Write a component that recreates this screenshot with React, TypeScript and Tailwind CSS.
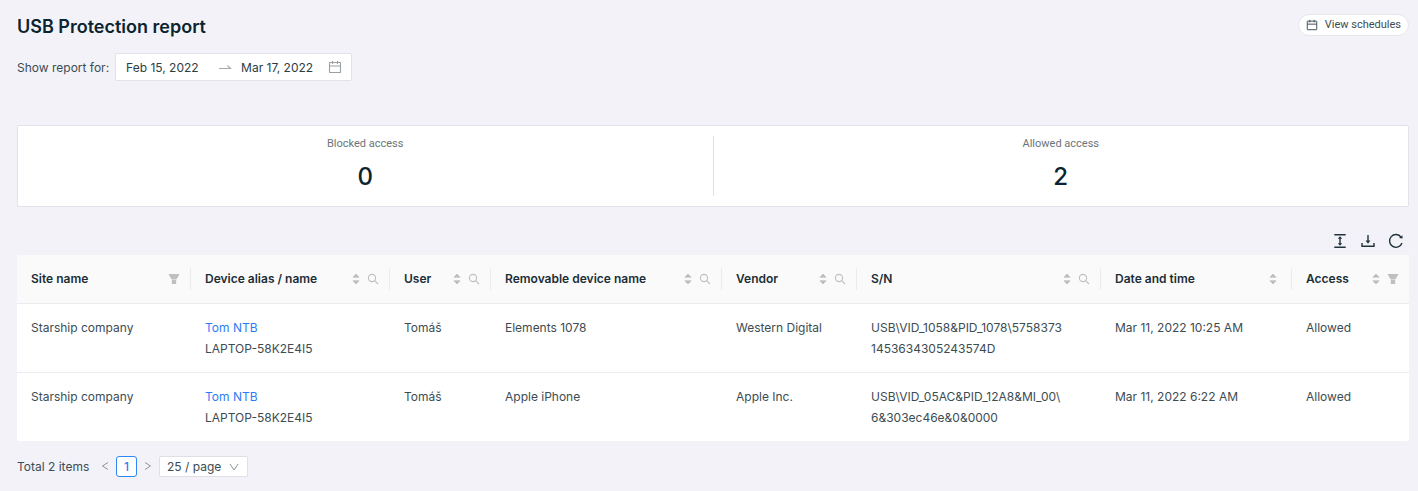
import { useState } from "react";
import type { ReactNode } from "react";

type Column = { title: string; width: string; sort?: boolean; search?: boolean; filter?: boolean };

const columns: Column[] = [
  { title: "Site name", width: "w-[174px]", filter: true },
  { title: "Device alias / name", width: "w-[199px]", sort: true, search: true },
  { title: "User", width: "w-[101px]", sort: true, search: true },
  { title: "Removable device name", width: "w-[231px]", sort: true, search: true },
  { title: "Vendor", width: "w-[135px]", sort: true, search: true },
  { title: "S/N", width: "w-auto", sort: true, search: true },
  { title: "Date and time", width: "w-[191px]", sort: true },
  { title: "Access", width: "w-[117px]", sort: true, filter: true },
];

const rows = [
  {
    site: "Starship company",
    alias: "Tom NTB",
    host: "LAPTOP-58K2E4I5",
    user: "Tomáš",
    device: "Elements 1078",
    vendor: "Western Digital",
    serial: ["USB\\VID_1058&PID_1078\\5758373", "1453634305243574D"],
    date: "Mar 11, 2022 10:25 AM",
    access: "Allowed",
  },
  {
    site: "Starship company",
    alias: "Tom NTB",
    host: "LAPTOP-58K2E4I5",
    user: "Tomáš",
    device: "Apple iPhone",
    vendor: "Apple Inc.",
    serial: ["USB\\VID_05AC&PID_12A8&MI_00\\", "6&303ec46e&0&0000"],
    date: "Mar 11, 2022 6:22 AM",
    access: "Allowed",
  },
];

function CalendarIcon({ className }: { className: string }) {
  return (
    <svg viewBox="0 0 14 14" className={className} fill="none" stroke="currentColor" strokeWidth="1.1" aria-hidden="true">
      <rect x="1.5" y="2.5" width="11" height="10" rx="0.3" />
      <path d="M1.5 6h11M4.5 1v3M9.5 1v3" />
    </svg>
  );
}

function SortIcon() {
  return (
    <svg viewBox="0 0 8 12" className="h-3 w-2" fill="currentColor" stroke="currentColor" strokeWidth="0.8" strokeLinejoin="round" aria-hidden="true">
      <path d="M4 1 7 4.2H1zM4 11 7 7.8H1z" />
    </svg>
  );
}

function SearchIcon() {
  return (
    <svg viewBox="0 0 12 12" className="size-3" fill="none" stroke="currentColor" strokeWidth="1.1" aria-hidden="true">
      <circle cx="5" cy="5" r="3.6" />
      <path d="m7.7 7.7 3.3 3.3" />
    </svg>
  );
}

function FilterIcon() {
  return (
    <svg viewBox="0 0 12 12" className="size-3" fill="currentColor" aria-hidden="true">
      <path d="M1.2 1h9.6c.4 0 .6.4.4.7L8.3 6.4H3.7L.8 1.7C.6 1.4.8 1 1.2 1zM3.8 6.9h4.4v3.6c0 .3-.2.5-.5.5H4.3c-.3 0-.5-.2-.5-.5z" />
    </svg>
  );
}

function IconButton({ label, className, children }: { label: string; className?: string; children: ReactNode }) {
  return (
    <button type="button" aria-label={label} className={`flex items-center justify-center ${className ?? ""}`}>
      {children}
    </button>
  );
}

function Stat({ label, value }: { label: string; value: number }) {
  return (
    <div className="flex flex-1 flex-col items-center">
      <span className="font-['Roboto',sans-serif] text-[11px] leading-4 text-[#6a757a]">{label}</span>
      <span className="mt-2 text-[24px] leading-[34px] font-medium text-[#0b2430]">{value}</span>
    </div>
  );
}

export default function App() {
  const [from, setFrom] = useState("Feb 15, 2022");
  const [to, setTo] = useState("Mar 17, 2022");

  return (
    <main className="min-h-screen bg-[#f3f2f8] pr-[9px] pb-3 pl-[17px] font-['Inter',sans-serif] text-[12px] leading-[21px] text-[#3c4c53]">
      <header className="flex items-start justify-between pt-[14px]">
        <h1 className="text-[18px] leading-[26px] font-semibold text-[#0b2430]">USB Protection report</h1>
        <button
          type="button"
          className="flex h-[22px] items-center gap-[7px] rounded-full border border-[#e6e6ec] bg-white px-[7px] font-['Roboto',sans-serif] text-[11px] leading-5 text-[#3c4c53]"
        >
          <CalendarIcon className="size-3" />
          View schedules
        </button>
      </header>

      <div className="mt-[13px] flex items-center gap-[6px]">
        <label htmlFor="from">Show report for:</label>
        <div className="flex h-7 w-[237px] items-center rounded-[2px] border border-[#e3e2e8] bg-white pr-[9px] pl-[10px]">
          <input
            id="from"
            value={from}
            onChange={(e) => setFrom(e.target.value)}
            className="w-[92px] text-[#2c3d44] outline-none"
          />
          <svg viewBox="0 0 14 8" className="h-2 w-[14px] text-[#a5abaf]" fill="none" stroke="currentColor" strokeWidth="1.2" aria-hidden="true">
            <path d="M1 5.5h11.5L9.5 2.5" />
          </svg>
          <input
            aria-label="Report end date"
            value={to}
            onChange={(e) => setTo(e.target.value)}
            className="ml-[9px] w-0 flex-1 text-[#2c3d44] outline-none"
          />
          <CalendarIcon className="size-[14px] text-[#9aa1a5]" />
        </div>
      </div>

      <section className="mt-11 flex h-[82px] rounded-[2px] border border-[#e3e2e8] bg-white py-[10px]">
        <Stat label="Blocked access" value={0} />
        <div className="w-px bg-[#dedee3]" />
        <Stat label="Allowed access" value={2} />
      </section>

      <div className="mt-[26px] flex justify-end gap-3 pr-[5px] text-[#21343d]">
        <IconButton label="Density">
          <svg viewBox="0 0 16 16" className="size-4" fill="none" stroke="currentColor" strokeWidth="1.4" aria-hidden="true">
            <path d="M2.3 1.7h11.4M2.3 14.3h11.4M8 4v8" />
            <path d="M5.8 5.8 8 3.2l2.2 2.6zM5.8 10.2 8 12.8l2.2-2.6z" fill="currentColor" stroke="none" />
          </svg>
        </IconButton>
        <IconButton label="Download">
          <svg viewBox="0 0 16 16" className="size-4" fill="none" stroke="currentColor" strokeWidth="1.4" aria-hidden="true">
            <path d="M2 10v3.3h12V10M8 2v7" />
            <path d="M5.6 7.6h4.8L8 10.7z" fill="currentColor" stroke="none" />
          </svg>
        </IconButton>
        <IconButton label="Reload">
          <svg viewBox="0 0 16 16" className="size-4" fill="none" stroke="currentColor" strokeWidth="1.4" aria-hidden="true">
            <path d="M13.1 4.1A6.4 6.4 0 1 0 14 10" />
            <path d="M11 5 14.6 5.4 14.4 2.2z" fill="currentColor" stroke="none" />
          </svg>
        </IconButton>
      </div>

      <table className="mt-[6px] w-full table-fixed overflow-hidden rounded-[2px] bg-white text-left">
        <thead className="bg-[#fafafa]">
          <tr className="border-b border-[#ececee]">
            {columns.map((c, i) => (
              <th key={c.title} scope="col" className={`${c.width} h-12 p-0 font-semibold text-[#1b2e37]`}>
                <div
                  className={`flex h-[22px] items-center justify-between pr-[10px] pl-[14px] ${
                    i < columns.length - 1 ? "border-r border-[#ebebed]" : ""
                  }`}
                >
                  <span className="whitespace-nowrap">{c.title}</span>
                  <span className={`flex items-center gap-[7px] text-[#bfbfbf] ${c.sort && !c.search && !c.filter ? "pr-1" : ""}`}>
                    {c.sort && (
                      <IconButton label={`Sort by ${c.title}`}>
                        <SortIcon />
                      </IconButton>
                    )}
                    {c.search && (
                      <IconButton label={`Search ${c.title}`}>
                        <SearchIcon />
                      </IconButton>
                    )}
                    {c.filter && (
                      <IconButton label={`Filter ${c.title}`}>
                        <FilterIcon />
                      </IconButton>
                    )}
                  </span>
                </div>
              </th>
            ))}
          </tr>
        </thead>
        <tbody className="[&_td]:px-[14px] [&_td]:py-[13px] [&_td]:align-top">
          {rows.map((r) => (
            <tr key={r.device} className="border-b border-[#ececee] last:border-0">
              <td>{r.site}</td>
              <td>
                <a href="#device" className="text-[#2f7bf6]">
                  {r.alias}
                </a>
                <br />
                {r.host}
              </td>
              <td>{r.user}</td>
              <td>{r.device}</td>
              <td>{r.vendor}</td>
              <td className="whitespace-nowrap">
                {r.serial[0]}
                <br />
                {r.serial[1]}
              </td>
              <td className="whitespace-nowrap">{r.date}</td>
              <td>{r.access}</td>
            </tr>
          ))}
        </tbody>
      </table>

      <nav aria-label="Pagination" className="mt-[15px] flex items-center">
        <span className="w-[82px] whitespace-nowrap">Total 2 items</span>
        <IconButton label="Previous page" className="h-[21px] w-[11px] text-[#8d969a]">
          <svg viewBox="0 0 8 10" className="h-[10px] w-2" fill="none" stroke="currentColor" aria-hidden="true">
            <path d="M7 1.5 1.5 5 7 8.5" />
          </svg>
        </IconButton>
        <button type="button" aria-current="page" className="ml-[6px] size-[21px] rounded-[3px] border border-[#2f86f6] bg-white leading-[19px] font-medium text-[#2f7bf6]">
          1
        </button>
        <IconButton label="Next page" className="ml-[5px] h-[21px] w-[11px] text-[#8d969a]">
          <svg viewBox="0 0 8 10" className="h-[10px] w-2" fill="none" stroke="currentColor" aria-hidden="true">
            <path d="M1 1.5 6.5 5 1 8.5" />
          </svg>
        </IconButton>
        <div className="relative ml-[6px]">
          <select
            aria-label="Items per page"
            className="block h-[21px] w-[89px] appearance-none rounded-[2px] border border-[#dfdfe5] bg-white pl-[7px] leading-[19px] outline-none"
          >
            <option>25 / page</option>
          </select>
          <svg viewBox="0 0 10 8" className="pointer-events-none absolute top-[7px] right-[9px] h-2 w-[10px] text-[#8d969a]" fill="none" stroke="currentColor" aria-hidden="true">
            <path d="M1 1l4 6 4-6" />
          </svg>
        </div>
      </nav>
    </main>
  );
}
